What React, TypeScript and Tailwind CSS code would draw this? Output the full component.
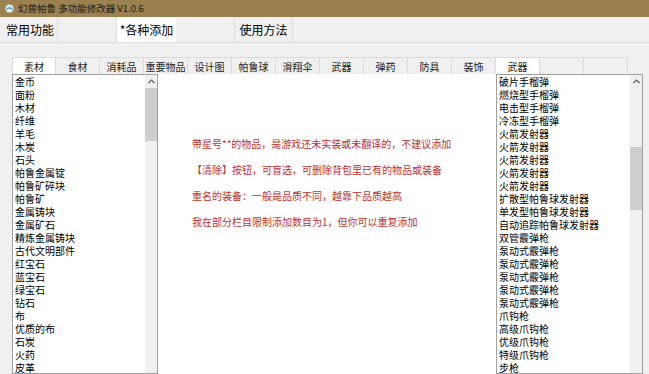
import React from 'react';

const leftItems = [
  '金币', '面粉', '木材', '纤维', '羊毛', '木炭', '石头', '帕鲁金属锭', '帕鲁矿碎块', '帕鲁矿',
  '金属铸块', '金属矿石', '精炼金属铸块', '古代文明部件', '红宝石', '蓝宝石', '绿宝石', '钻石',
  '布', '优质的布', '石炭', '火药', '皮革',
];

const rightItems = [
  '破片手榴弹', '燃烧型手榴弹', '电击型手榴弹', '冷冻型手榴弹', '火箭发射器', '火箭发射器',
  '火箭发射器', '火箭发射器', '火箭发射器', '扩散型帕鲁球发射器', '单发型帕鲁球发射器',
  '自动追踪帕鲁球发射器', '双管霰弹枪', '泵动式霰弹枪', '泵动式霰弹枪', '泵动式霰弹枪',
  '泵动式霰弹枪', '泵动式霰弹枪', '爪钩枪', '高级爪钩枪', '优级爪钩枪', '特级爪钩枪', '步枪',
];

const subTabs = ['素材', '食材', '消耗品', '重要物品', '设计图', '帕鲁球', '滑翔伞', '武器', '弹药', '防具', '装饰', '武器', '', ''];

const notes = [
  '带星号**的物品，是游戏还未实装或未翻译的，不建议添加',
  '【清除】按钮，可盲选，可删除背包里已有的物品或装备',
  '重名的装备：一般是品质不同，越靠下品质越高',
  '我在部分栏目限制添加数目为1，但你可以重复添加',
];

const font = { fontFamily: '"Noto Sans CJK SC", "Microsoft YaHei", sans-serif' };

// Windows-style scrollbar with the up arrow and a thumb
const ScrollBar: React.FC<{ thumbTop: number; thumbHeight: number }> = ({ thumbTop, thumbHeight }) => (
  <div className="w-[12px] shrink-0 bg-[#f0f0f0] flex flex-col">
    <div className="h-[13px] flex items-center justify-center">
      <svg width="7" height="5" viewBox="0 0 7 5">
        <path d="M0.5 4 L3.5 1 L6.5 4" fill="none" stroke="#606060" strokeWidth="1.2" />
      </svg>
    </div>
    <div className="w-full bg-[#cdcdcd]" style={{ marginTop: thumbTop, height: thumbHeight }} />
  </div>
);

const ListBox: React.FC<{ items: string[]; width: string; thumbTop: number; thumbHeight: number }> = ({ items, width, thumbTop, thumbHeight }) => (
  <div className={`${width} shrink-0 h-full flex border border-[#a0a0a0] bg-white overflow-hidden`}>
    <div className="flex-1 pl-[2px] text-[10px] leading-[13px] text-black">
      {items.map((it, i) => (
        <div key={i} className="h-[13px] leading-[13px] whitespace-nowrap overflow-hidden">{it}</div>
      ))}
    </div>
    <ScrollBar thumbTop={thumbTop} thumbHeight={thumbHeight} />
  </div>
);

export default function App() {
  return (
    <div className="w-[649px] h-[374px] overflow-hidden bg-[#f0f0f0] flex flex-col" style={font}>
      {/* title bar */}
      <div className="h-[17px] shrink-0 bg-[#9b814f] flex items-center pl-[5px] gap-[4px] text-[9.5px] text-[#1a1a1a]">
        <svg width="9" height="9" viewBox="0 0 10 10">
          <circle cx="5" cy="5" r="4.5" fill="#d8ecf8" />
          <path d="M1 6 Q5 1 9 6 Z" fill="#3a8fd0" />
          <circle cx="5" cy="7" r="2" fill="#ffffff" />
        </svg>
        <span>幻兽帕鲁 多功能修改器 V1.0.6</span>
      </div>

      {/* main nav */}
      <div className="h-[26px] shrink-0 flex border-b border-[#dcdcdc] text-[12px] text-black">
        <div className="w-[58px] border-r border-[#dcdcdc] flex items-center pl-[6px]">常用功能</div>
        <div className="w-[59px] border-r border-[#dcdcdc]" />
        <div className="w-[59px] bg-white flex items-center justify-center">*各种添加</div>
        <div className="w-[59px] border-r border-[#dcdcdc]" />
        <div className="w-[58px] border-r border-[#dcdcdc] flex items-center justify-center">使用方法</div>
      </div>

      {/* sub tabs */}
      <div className="mt-[14px] h-[17px] shrink-0 flex pl-[12px] text-[10px] text-[#222]">
        {subTabs.map((t, i) => {
          const selected = i === 0 || i === 11;
          return (
            <div
              key={i}
              className={`w-[44px] flex items-center justify-center border-t border-r border-[#dadada] ${i === 0 ? 'border-l' : ''} ${selected ? 'bg-white' : 'bg-[#f0f0f0]'}`}
            >
              {t}
            </div>
          );
        })}
      </div>

      {/* content */}
      <div className="flex-1 flex ml-[12px] mr-[6px] bg-white min-h-0">
        <ListBox items={leftItems} width="w-[146px]" thumbTop={0} thumbHeight={53} />
        <div className="flex-1 pt-[57px] pl-[34px] text-[10px] leading-[26px] text-[#c0302e]">
          {notes.map((n, i) => (
            <div key={i} className="whitespace-nowrap">{n}</div>
          ))}
        </div>
        <ListBox items={rightItems} width="w-[147px]" thumbTop={59} thumbHeight={63} />
      </div>
    </div>
  );
}
